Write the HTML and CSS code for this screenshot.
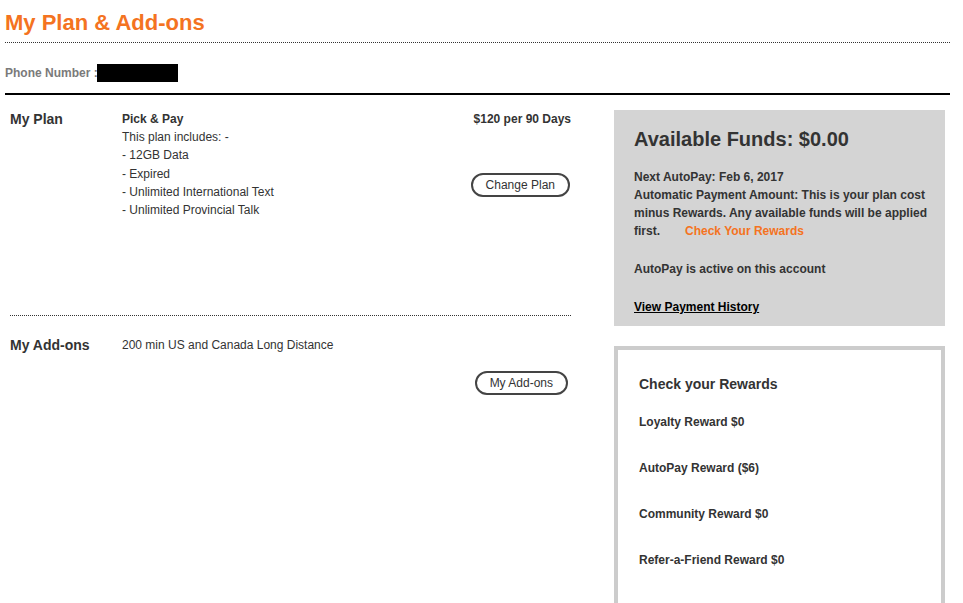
FILE: index.html
```html
<!DOCTYPE html>
<html lang="en">
<head>
    <meta charset="UTF-8">
    <title>My Plan &amp; Add-ons</title>
    <link rel="stylesheet" href="styles.css">
</head>
<body>
  <div class="page">
    <!-- title -->
    <h1 class="title">My Plan &amp; Add-ons</h1>

    <div class="phone">
      <span class="phone-label">Phone Number :</span>
      <span class="phone-mask"></span>
    </div>

    <div class="main">
      <!-- left : plan + add-ons -->
      <div class="plans">
        <div class="row plan-row">
          <div class="row-label">My Plan</div>
          <div class="row-body">
            <div class="plan-name">Pick &amp; Pay</div>
            <div class="plan-item">This plan includes: -</div>
            <div class="plan-item">- 12GB Data</div>
            <div class="plan-item">- Expired</div>
            <div class="plan-item">- Unlimited International Text</div>
            <div class="plan-item">- Unlimited Provincial Talk</div>
          </div>
          <div class="row-side">
            <div class="price">$120 per 90 Days</div>
            <button class="pill plan-btn">Change Plan</button>
          </div>
        </div>

        <div class="row addon-row">
          <div class="row-label">My Add-ons</div>
          <div class="row-body">
            <div>200 min US and Canada Long Distance</div>
            <div class="addon-act">
              <button class="pill">My Add-ons</button>
            </div>
          </div>
        </div>
      </div>

      <!-- right : funds + rewards -->
      <div class="aside">
        <div class="funds">
          <h2 class="funds-title">Available Funds: $0.00</h2>
          <p class="funds-text">
            Next AutoPay: Feb 6, 2017<br>
            Automatic Payment Amount: This is your plan cost minus Rewards. Any available funds will be applied first.<a href="#" class="orange-link">Check Your Rewards</a>
          </p>
          <p class="funds-text">AutoPay is active on this account</p>
          <p class="funds-text"><a href="#" class="history">View Payment History</a></p>
        </div>

        <div class="rewards">
          <h3 class="rewards-title">Check your Rewards</h3>
          <div class="reward">Loyalty Reward $0</div>
          <div class="reward">AutoPay Reward ($6)</div>
          <div class="reward">Community Reward $0</div>
          <div class="reward">Refer-a-Friend Reward $0</div>
        </div>
      </div>
    </div>
  </div>
</body>
</html>
```

FILE: styles.css
```css
body{
  margin: 0;
  background: #fff;
  color: #333;
  font-family: "Liberation Sans", Arial, sans-serif;
  font-size: 12px;
  line-height: 18px;
}

.page{
  padding: 0 13px 0 5px;
}

/* title */
.title{
  margin: 0;
  padding: 10px 0 6px;
  font-size: 22px;
  line-height: 26px;
  color: #f47321;
  border-bottom: 1px dotted #333;
}

/* phone number row */
.phone{
  display: flex;
  align-items: center;
  padding: 21px 0 11px;
  border-bottom: 2px solid #000;
}
.phone-label{
  font-weight: bold;
  color: #7a7a7a;
}
.phone-mask{
  width: 81px;
  height: 18px;
  margin-left: -1px;
  background: #000;
}

.main{
  display: flex;
  padding-top: 15px;
}

/* left column */
.plans{
  width: 561px;
  margin-left: 5px;
}
.row{
  display: flex;
}
.row-label{
  width: 112px;
  font-size: 14px;
  font-weight: bold;
}
.row-body{
  flex: 1;
}
.row-side{
  text-align: right;
}
.plan-row{
  height: 205px;
  border-bottom: 1px dotted #333;
}
.plan-name,
.price{
  font-weight: bold;
}
.plan-item{
  line-height: 18.3px;
}
.plan-btn{
  margin: 45px 1px 0 0;
}
.addon-row{
  padding-top: 20px;
}
.addon-act{
  margin-top: 17px;
  text-align: right;
  padding-right: 3px;
}

.pill{
  height: 24px;
  padding: 0 13px;
  border: 2px solid #444;
  border-radius: 12px;
  background: #fff;
  color: #333;
  font-family: inherit;
  font-size: 12px;
  line-height: 20px;
}

/* right column */
.aside{
  width: 331px;
  margin: 0 5px 0 auto;
}
.funds{
  height: 216px;
  box-sizing: border-box;
  padding: 17px 14px 0 20px;
  background: #d4d4d4;
}
.funds-title{
  margin: 0 0 17px;
  font-size: 20px;
  line-height: 24px;
}
.funds-text{
  margin: 0 0 20px;
  font-weight: bold;
}
.orange-link{
  display: inline-block;
  margin-left: 25px;
  color: #f47321;
  text-decoration: none;
}
.history{
  color: #000;
  text-decoration: underline;
}

.rewards{
  margin-top: 20px;
  padding: 25px 21px 60px;
  border: 4px solid #ccc;
}
.rewards-title{
  margin: 0 0 20px;
  font-size: 14px;
  line-height: 18px;
}
.reward{
  margin-bottom: 28px;
  font-weight: bold;
}
```
